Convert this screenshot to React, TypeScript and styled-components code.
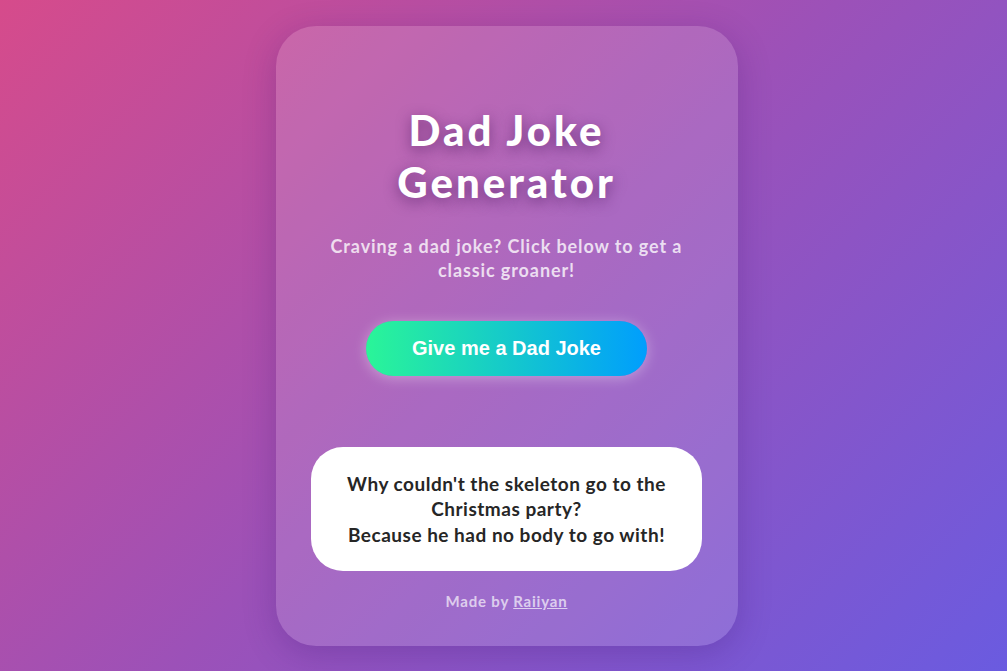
import React from "react";
import styled, { createGlobalStyle } from "styled-components";

const GlobalStyle = createGlobalStyle`
  html, body {
    margin: 0;
    padding: 0;
  }

  body {
    font-family: "Lato", "Noto Sans", sans-serif;
  }
`;

const Page = styled.div`
  min-height: 671px;
  box-sizing: border-box;
  padding: 26px 0 25px 6px;
  background: linear-gradient(135deg, #d64b8b 0%, #9c51b8 50%, #6a5be0 100%);

  display: flex;
  justify-content: center;
  align-items: flex-start;
`;

const Card = styled.div`
  width: 462px;
  height: 620px;
  box-sizing: border-box;
  padding: 78px 36px 0;
  border-radius: 40px;
  background: rgba(255, 255, 255, 0.14);
  box-shadow: 0 8px 32px rgba(60, 20, 110, 0.25);

  display: flex;
  flex-direction: column;
  align-items: center;
  text-align: center;
`;

const Title = styled.h1`
  margin: 0;
  width: 280px;
  font-size: 42px;
  line-height: 52px;
  font-weight: 900;
  letter-spacing: 3px;
  color: #fff;
  text-shadow: 0 4px 14px rgba(70, 20, 90, 0.6);
`;

const Subtitle = styled.p`
  margin: 26px 0 0;
  width: 370px;
  font-size: 18px;
  line-height: 24px;
  font-weight: 700;
  letter-spacing: 0.9px;
  color: rgba(255, 255, 255, 0.78);
`;

const JokeButton = styled.button`
  margin-top: 39px;
  width: 281px;
  height: 55px;
  border: none;
  border-radius: 28px;
  background: linear-gradient(90deg, #2af598 0%, #009efd 100%);
  box-shadow: 0 2px 14px rgba(255, 255, 255, 0.35);
  font-family: "Liberation Sans", Arial, sans-serif;
  font-size: 20px;
  font-weight: 700;
  color: #fff;
  cursor: pointer;
`;

const JokeBox = styled.div`
  margin-top: 71px;
  width: 391px;
  height: 124px;
  box-sizing: border-box;
  padding: 0 26px;
  border-radius: 32px;
  background: #fff;

  display: flex;
  align-items: center;
  justify-content: center;
`;

const JokeText = styled.p`
  margin: 0;
  font-size: 19px;
  line-height: 25.5px;
  font-weight: 700;
  letter-spacing: 0.5px;
  color: #262626;
`;

const Footer = styled.p`
  margin: 21px 0 0;
  font-size: 15px;
  font-weight: 700;
  letter-spacing: 0.8px;
  color: rgba(255, 255, 255, 0.68);
`;

const Link = styled.a`
  color: inherit;
  text-decoration: underline;
`;

const App: React.FC = () => {
  return (
    <>
      <GlobalStyle />
      <Page>
        <Card>
          <Title>Dad Joke Generator</Title>
          <Subtitle>
            Craving a dad joke? Click below to get a classic groaner!
          </Subtitle>

          <JokeButton>Give me a Dad Joke</JokeButton>

          {/* JOKE */}
          <JokeBox>
            <JokeText>
              Why couldn't the skeleton go to the Christmas party?
              <br />
              Because he had no body to go with!
            </JokeText>
          </JokeBox>

          <Footer>
            Made by <Link href="#">Raiiyan</Link>
          </Footer>
        </Card>
      </Page>
    </>
  );
};

export default App;
